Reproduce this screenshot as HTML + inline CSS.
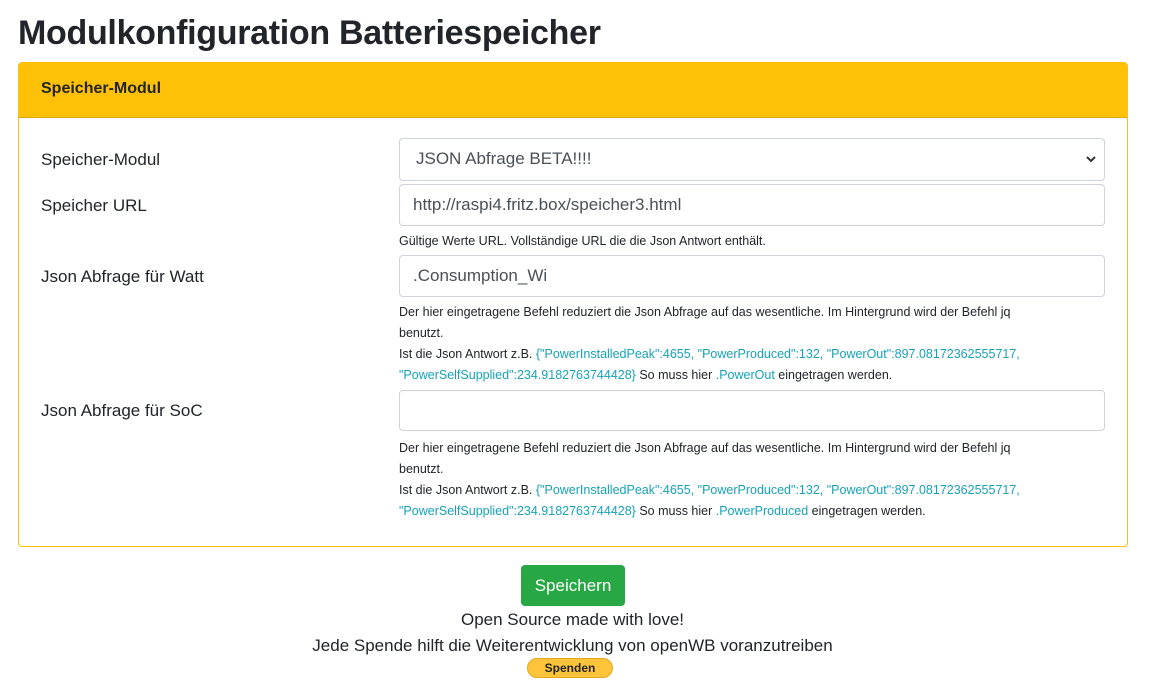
<!DOCTYPE html>
<html><head><meta charset="utf-8"><style>
body{margin:0;background:#fff;font-family:"Liberation Sans",sans-serif;color:#212529;width:1175px;height:696px;position:relative;overflow:hidden}
.a{position:absolute;white-space:nowrap}
h1{position:absolute;left:18px;top:14px;margin:0;font-size:34px;font-weight:bold;letter-spacing:-0.3px}
.card{position:absolute;left:18px;top:62px;width:1108px;height:483px;border:1px solid #ffc107;border-radius:4px}
.hdr{position:absolute;left:0;top:0;right:0;height:54px;background:#ffc107;border-bottom:1px solid #e0a800;border-radius:3px 3px 0 0}
.lbl{font-size:17px}
.inp{position:absolute;left:399px;width:706px;border:1px solid #ced4da;border-radius:4px;font-size:17px;color:#495057;box-sizing:border-box;padding:10px 13px}
.h{font-size:12.5px;line-height:21px;left:399px}
.c{color:#17a2b8}
</style></head><body>
<h1>Modulkonfiguration Batteriespeicher</h1>
<div class="card"><div class="hdr"></div></div>
<div class="a" style="left:41px;top:80px;font-size:16px;font-weight:bold">Speicher-Modul</div>

<div class="a lbl" style="left:41px;top:150px">Speicher-Modul</div>
<div class="inp" style="top:138px;height:43px;padding-left:16px">JSON Abfrage BETA!!!!<svg style="position:absolute;right:8px;top:16px" width="10" height="8" viewBox="0 0 10 8"><path d="M1 2 L5 6 L9 2" stroke="#333" stroke-width="2" fill="none"/></svg></div>

<div class="a lbl" style="left:41px;top:196px">Speicher URL</div>
<div class="inp" style="top:184px;height:42px">http://raspi4.fritz.box/speicher3.html</div>
<div class="a h" style="top:231px">Gültige Werte URL. Vollständige URL die die Json Antwort enthält.</div>

<div class="a lbl" style="left:41px;top:267px">Json Abfrage für Watt</div>
<div class="inp" style="top:255px;height:42px">.Consumption_Wi</div>
<div class="a h" style="top:302px">Der hier eingetragene Befehl reduziert die Json Abfrage auf das wesentliche. Im Hintergrund wird der Befehl jq<br>benutzt.<br>Ist die Json Antwort z.B. <span class="c">{"PowerInstalledPeak":4655, "PowerProduced":132, "PowerOut":897.08172362555717,</span><br><span class="c">"PowerSelfSupplied":234.9182763744428}</span> So muss hier <span class="c">.PowerOut</span> eingetragen werden.</div>

<div class="a lbl" style="left:41px;top:401px">Json Abfrage für SoC</div>
<div class="inp" style="top:390px;height:41px"></div>
<div class="a h" style="top:438px">Der hier eingetragene Befehl reduziert die Json Abfrage auf das wesentliche. Im Hintergrund wird der Befehl jq<br>benutzt.<br>Ist die Json Antwort z.B. <span class="c">{"PowerInstalledPeak":4655, "PowerProduced":132, "PowerOut":897.08172362555717,</span><br><span class="c">"PowerSelfSupplied":234.9182763744428}</span> So muss hier <span class="c">.PowerProduced</span> eingetragen werden.</div>

<div class="a" style="left:521px;top:565px;width:104px;height:41px;background:#28a745;border-radius:4px;color:#fff;font-size:17px;text-align:center;line-height:41px">Speichern</div>
<div class="a" style="left:0;width:1145px;text-align:center;top:610px;font-size:17px">Open Source made with love!</div>
<div class="a" style="left:0;width:1145px;text-align:center;top:636px;font-size:17px">Jede Spende hilft die Weiterentwicklung von openWB voranzutreiben</div>
<div class="a" style="left:527px;top:658px;width:86px;height:20px;background:#ffc439;border:1px solid #e5a823;box-sizing:border-box;border-radius:10px;font-size:12px;font-weight:bold;text-align:center;line-height:18px">Spenden</div>
</body></html>
